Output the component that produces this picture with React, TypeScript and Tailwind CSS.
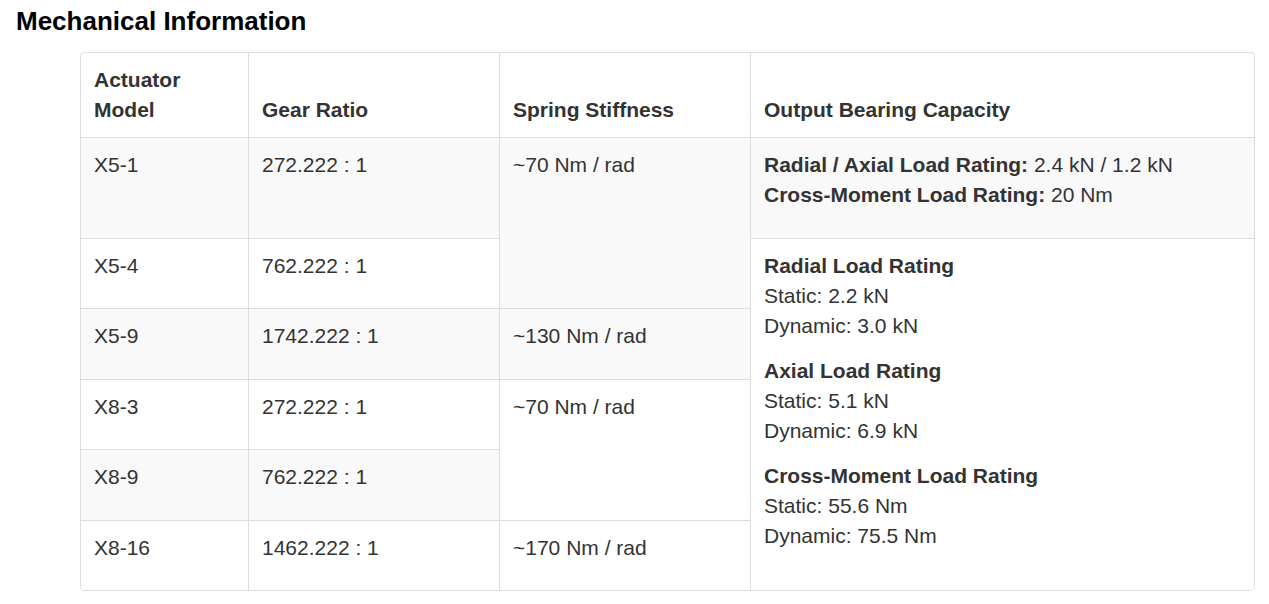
const rows = [
  { model: "X5-1", ratio: "272.222 : 1" },
  { model: "X5-4", ratio: "762.222 : 1" },
  { model: "X5-9", ratio: "1742.222 : 1" },
  { model: "X8-3", ratio: "272.222 : 1" },
  { model: "X8-9", ratio: "762.222 : 1" },
  { model: "X8-16", ratio: "1462.222 : 1" },
];

// spring stiffness cells, keyed by the row they start on
const springs: Record<number, { text: string; span: number }> = {
  0: { text: "~70 Nm / rad", span: 2 },
  2: { text: "~130 Nm / rad", span: 1 },
  3: { text: "~70 Nm / rad", span: 2 },
  5: { text: "~170 Nm / rad", span: 1 },
};

const th = "border-r border-[#dddddd] px-[13px] pt-3 pb-3 text-left align-bottom font-bold";
const td = "border-t border-r border-[#dddddd] px-[13px] pt-3 pb-[27.5px] align-top";

function BearingDetails() {
  const groups = [
    { title: "Radial Load Rating", s: "2.2 kN", d: "3.0 kN" },
    { title: "Axial Load Rating", s: "5.1 kN", d: "6.9 kN" },
    { title: "Cross-Moment Load Rating", s: "55.6 Nm", d: "75.5 Nm" },
  ];
  return (
    <div className="flex flex-col gap-[15px]">
      {groups.map((g) => (
        <div key={g.title}>
          <div className="font-bold">{g.title}</div>
          <div>Static: {g.s}</div>
          <div>Dynamic: {g.d}</div>
        </div>
      ))}
    </div>
  );
}

export default function App() {
  return (
    <div className="bg-white min-h-screen px-[15px] pt-[3px] font-['Liberation_Sans',Arial,sans-serif]">
      <h2 className="text-[26px] leading-[36px] font-bold text-black mb-[13px] pl-px">Mechanical Information</h2>
      <div className="ml-[65px] w-[1175px] border border-[#dddddd] rounded-[4px] overflow-hidden">
        <table className="table-fixed w-full border-separate border-spacing-0 text-[21px] leading-[30px] text-[#333333]">
          <colgroup>
            <col className="w-[168px]" />
            <col className="w-[251px]" />
            <col className="w-[251px]" />
            <col />
          </colgroup>
          <thead>
            <tr>
              <th className={th}>Actuator Model</th>
              <th className={th}>Gear Ratio</th>
              <th className={th}>Spring Stiffness</th>
              <th className={th + " border-r-0"}>Output Bearing Capacity</th>
            </tr>
          </thead>
          <tbody>
            {rows.map((r, i) => {
              const bg = i % 2 === 0 ? "bg-[#f9f9f9]" : "bg-white";
              const sp = springs[i];
              return (
                <tr key={r.model} className={bg}>
                  <td className={td}>{r.model}</td>
                  <td className={td}>{r.ratio}</td>
                  {sp && (
                    <td className={td} rowSpan={sp.span}>
                      {sp.text}
                    </td>
                  )}
                  {i === 0 && (
                    <td className={td + " border-r-0"}>
                      <div>
                        <b>Radial / Axial Load Rating:</b> 2.4 kN / 1.2 kN
                      </div>
                      <div>
                        <b>Cross-Moment Load Rating:</b> 20 Nm
                      </div>
                    </td>
                  )}
                  {i === 1 && (
                    <td className={td + " border-r-0"} rowSpan={5}>
                      <BearingDetails />
                    </td>
                  )}
                </tr>
              );
            })}
          </tbody>
        </table>
      </div>
    </div>
  );
}
